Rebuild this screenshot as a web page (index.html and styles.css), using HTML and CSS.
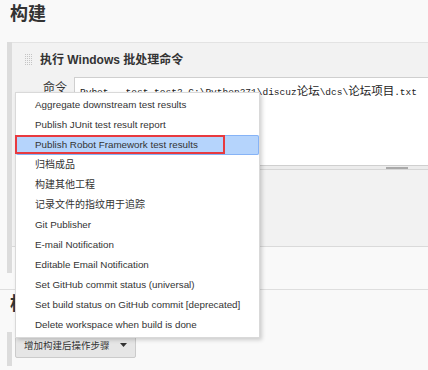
FILE: index.html
```html
<!DOCTYPE html>
<html>
<head>
  <title>构建</title>
  <link rel="stylesheet" href="styles.css">
</head>
<body>

  <div class="section-header">
    <h2>构建</h2>
  </div>

  <div class="chunk">
    <div class="step">
      <div class="step-title">
        <svg class="handle" width="8" height="12" viewBox="0 0 8 12">
          <defs>
            <pattern id="dots" width="2" height="2" patternUnits="userSpaceOnUse">
              <rect width="1" height="1" fill="#c4c4c4"/>
            </pattern>
          </defs>
          <rect width="8" height="12" fill="url(#dots)"/>
        </svg>
        <b>执行 Windows 批处理命令</b>
      </div>
      <div class="field">
        <label class="field-label">命令</label>
        <div class="editor">
          <div class="textbox">Pybot --test test2 G:\Python271\discuz<span class="zh">论坛</span>\dcs\<span class="zh">论坛项目</span>.txt</div>
          <div class="grippie"><span class="grip"></span></div>
        </div>
      </div>
    </div>
    <div class="add-row">
      <button type="button" class="btn">增加构建步骤</button>
    </div>
  </div>

  <div class="section-header line">
    <h2>构建后操作</h2>
  </div>

  <div class="chunk post">
    <button type="button" class="btn">增加构建后操作步骤
      <svg class="caret" width="7" height="4" viewBox="0 0 7 4"><path d="M0 0h7L3.5 4z" fill="#333"/></svg>
    </button>
  </div>

  <!-- menu opened from the post build button -->
  <div class="menu">
    <div class="menu-item">Aggregate downstream test results</div>
    <div class="menu-item">Publish JUnit test result report</div>
    <div class="menu-item active">Publish Robot Framework test results</div>
    <div class="menu-item zh">归档成品</div>
    <div class="menu-item zh">构建其他工程</div>
    <div class="menu-item zh">记录文件的指纹用于追踪</div>
    <div class="menu-item">Git Publisher</div>
    <div class="menu-item">E-mail Notification</div>
    <div class="menu-item">Editable Email Notification</div>
    <div class="menu-item">Set GitHub commit status (universal)</div>
    <div class="menu-item">Set build status on GitHub commit [deprecated]</div>
    <div class="menu-item">Delete workspace when build is done</div>
    <div class="mark"></div>
  </div>

</body>
</html>
```

FILE: styles.css
```css
html, body {
  overflow: hidden;
}

body {
  font-family: "Liberation Sans", Arial, "Noto Sans CJK SC", sans-serif;
  font-size: 12px;
  background-color: #f9f9f9;
  color: #333;
  margin: 0;
  padding: 0;
  position: relative;
  height: 370px;
}

.section-header {
  padding: 2px 10px 0;
  margin-bottom: 16px;
}

.section-header.line {
  border-top: 1px solid #dedede;
  margin-top: 16px;
}

.section-header h2 {
  margin: 0;
  font-size: 18px;
  line-height: 24px;
  font-weight: bold;
  color: #333;
}

.chunk {
  margin-left: 7px;
  border-left: 5px solid #dcdcdc;
}

.step {
  background-color: #f2f2f2;
  border-top: 1px solid #e3e3e3;
  border-bottom: 1px solid #dadada;
  height: 203px;
  padding-left: 13px;
}

.step-title {
  display: flex;
  align-items: center;
  gap: 7px;
  padding-top: 10px;
  height: 14px;
  line-height: 14px;
}

.step-title b {
  font-size: 12px;
  color: #333;
}

.field {
  display: flex;
  gap: 7px;
  margin-top: 10px;
}

.field-label {
  width: 42px;
  flex-shrink: 0;
  text-align: right;
  padding-top: 4px;
  line-height: 14px;
  white-space: nowrap;
}

.editor {
  width: 600px;
  flex-shrink: 0;
}

.textbox {
  height: 77px;
  background-color: #fff;
  border: 1px solid #cfcfcf;
  padding: 5px;
  font-family: "Liberation Mono", "Courier New", monospace;
  font-size: 9.5px;
  line-height: 14px;
  white-space: nowrap;
  color: #222;
}

.textbox .zh {
  font-family: "Noto Sans CJK SC", sans-serif;
  font-size: 11.5px;
}

.grippie {
  height: 3px;
  border-bottom: 1px solid #d6d6d6;
  background-color: #ececec;
  display: flex;
  align-items: center;
}

.grip {
  display: block;
  width: 22px;
  height: 2px;
  margin-left: 312px;
  background-color: #a9a9a9;
}

.add-row {
  height: 26px;
  padding-left: 3px;
}

.post {
  margin-top: 0;
  padding: 0 0 8px 3px;
}

.btn {
  font-family: "Liberation Sans", Arial, "Noto Sans CJK SC", sans-serif;
  font-size: 9.5px;
  color: #333;
  background-color: #e6e6e6;
  border: 1px solid #cbcbcb;
  border-radius: 2px;
  height: 26px;
  padding: 0 8px;
  display: flex;
  align-items: center;
  gap: 10px;
}

.caret {
  display: block;
}

.menu {
  position: absolute;
  left: 15px;
  top: 92px;
  width: 243px;
  padding: 2px 0;
  background-color: #fff;
  border: 1px solid #d9d9d9;
  box-shadow: 2px 2px 4px rgba(0, 0, 0, 0.18);
}

.menu-item {
  height: 20px;
  line-height: 20px;
  padding-left: 19px;
  font-size: 9.8px;
  color: #333;
  white-space: nowrap;
}

.menu-item.zh {
  font-size: 10px;
}

.menu-item.active {
  background-color: #b5d4fc;
  box-shadow: inset 0 0 0 1px #86b3f6;
  border-radius: 2px;
}

.mark {
  position: absolute;
  left: -1px;
  top: 42px;
  width: 206px;
  height: 15px;
  border: 2px solid #e83a3f;
}
```
